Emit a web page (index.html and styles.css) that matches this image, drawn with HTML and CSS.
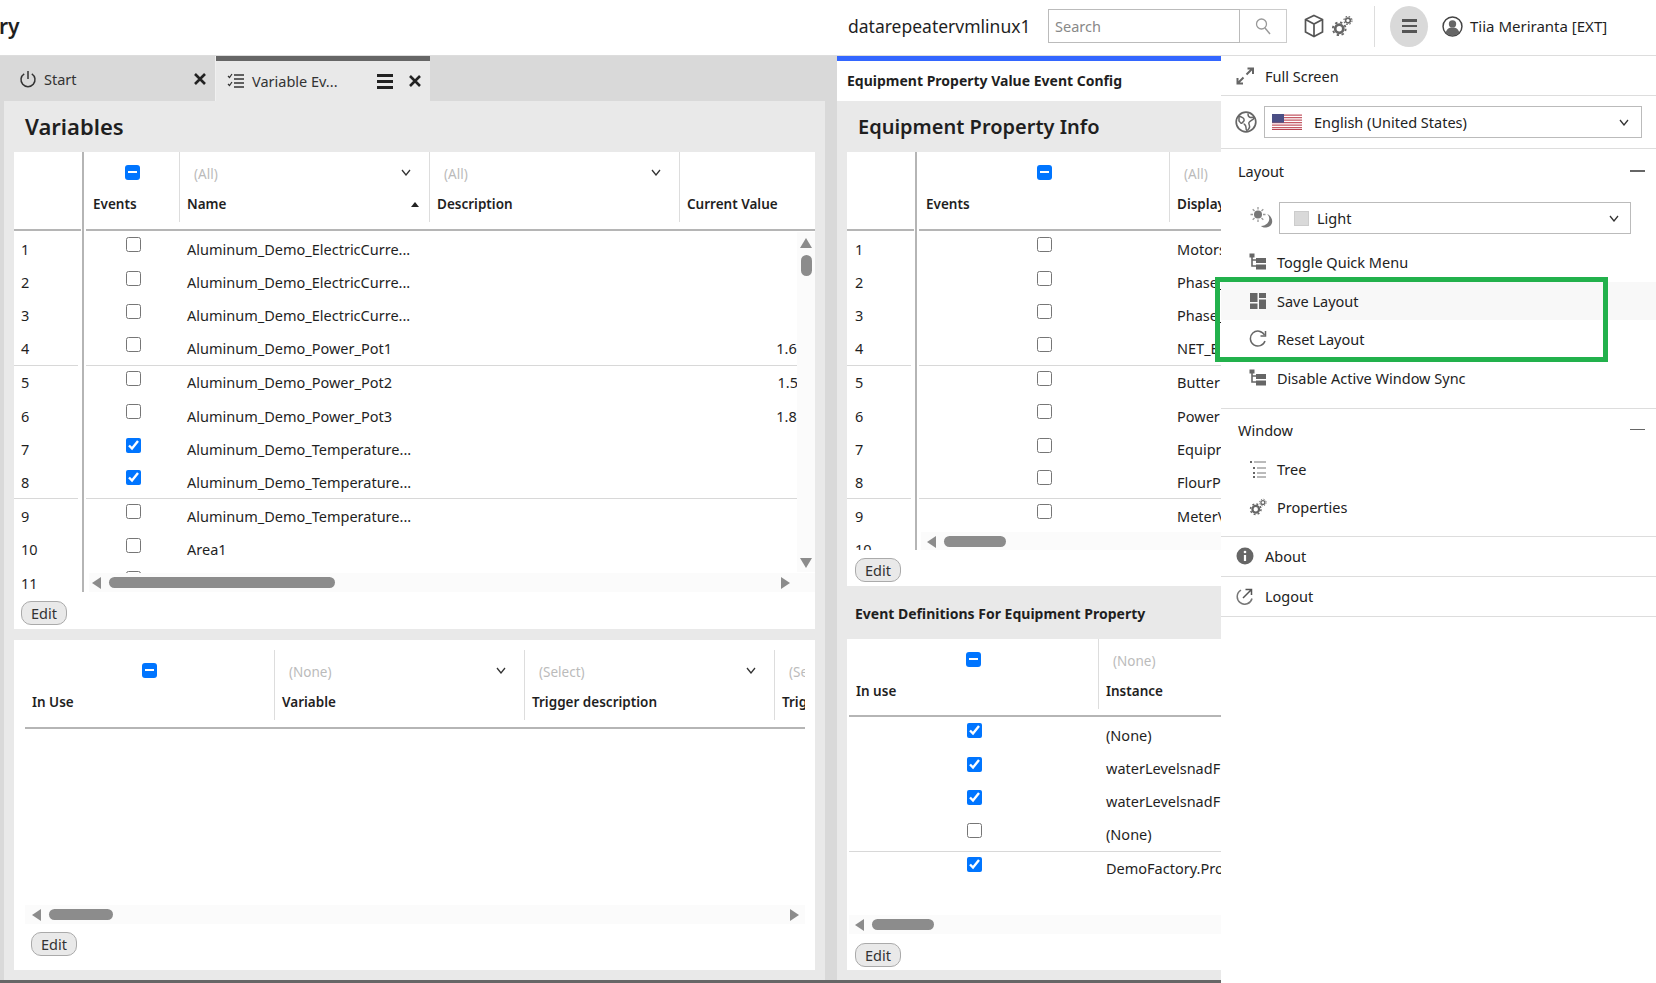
FILE: index.html
```html
<!DOCTYPE html>
<html lang="en">
<head>
<meta charset="utf-8">
<title>Variable Events</title>
<link rel="stylesheet" href="styles.css">
</head>
<body>
<svg class="defs" aria-hidden="true">
  <symbol id="chev" viewBox="0 0 10 7"><path d="M1 1l4 5 4-5" fill="none" stroke="#333" stroke-width="1.3"/></symbol>
  <symbol id="close" viewBox="0 0 12 12"><path d="M1 1l10 10M11 1L1 11" fill="none" stroke="#222" stroke-width="2.6"/></symbol>
  <symbol id="tree" viewBox="0 0 18 18"><path d="M3 3v10h5M3 7h5" fill="none" stroke="#666" stroke-width="1.6"/><rect x="0.5" y="0.5" width="5" height="4" fill="#666"/><rect x="7" y="5" width="10" height="5" fill="#666"/><rect x="7" y="11.5" width="10" height="5" fill="#666"/></symbol>
  <symbol id="gears" viewBox="0 0 24 24"><g fill="none" stroke="#666"><circle cx="9" cy="15" r="4.4" stroke-width="3"/><circle cx="9" cy="15" r="7" stroke-width="2" stroke-dasharray="2.6 2.9"/><circle cx="18.5" cy="6" r="2.6" stroke-width="1.7"/><circle cx="18.5" cy="6" r="4.4" stroke-width="1.2" stroke-dasharray="1.7 1.8"/></g></symbol>
</svg>

<div class="app">
  <header class="top">
    <div class="brand">ry</div>
    <div class="host">datarepeatervmlinux1</div>
    <div class="search">
      <div class="search-input">Search</div>
      <div class="search-btn"><svg class="i18" viewBox="0 0 18 18"><circle cx="7.5" cy="7" r="5" fill="none" stroke="#999" stroke-width="1.3"/><path d="M11 11l5 6" stroke="#999" stroke-width="1.4"/></svg></div>
    </div>
    <svg class="cube" viewBox="0 0 20 24"><path d="M10 1.5l8.5 4v12.5L10 22.5 1.5 18V5.500zM1.500 5.500L10 10l8.500-4.500M10 10v12.500" fill="none" stroke="#555" stroke-width="1.7"/></svg>
    <svg class="gears-top"><use href="#gears"/></svg>
    <div class="vr"></div>
    <div class="burger"><span></span><span></span><span></span></div>
    <svg class="user" viewBox="0 0 20 20"><circle cx="10" cy="10" r="9" fill="#fff" stroke="#444" stroke-width="1.4"/><circle cx="10" cy="7.500" r="3.500" fill="#666"/><path d="M3.500 16c1-4 3.500-5 6.500-5s5.500 1 6.500 5a9 9 0 0 1-13 0z" fill="#666"/></svg>
    <div class="username">Tiia Meriranta [EXT]</div>
  </header>

  <div class="body">
    <div class="workspace">
      <div class="panes">
        <section class="pane pane-left">
          <div class="tabs">
            <div class="tab tab-start">
              <svg class="i18" viewBox="0 0 18 18"><path d="M5.200 3.800a7 7 0 1 0 7.600 0M9 1v8" fill="none" stroke="#333" stroke-width="1.500"/></svg>
              <span class="tab-name">Start</span>
              <svg class="x"><use href="#close"/></svg>
            </div>
            <div class="tab tab-active">
              <svg class="i18" viewBox="0 0 18 18"><path d="M1 4l1.500 1.500L5 2M1 12l1.500 1.500L5 10" fill="none" stroke="#333" stroke-width="1.200"/><path d="M7 3h10M7 7h10M7 11h10M7 15h10" stroke="#333" stroke-width="1.400"/></svg>
              <span class="tab-name">Variable Ev...</span>
              <span class="tab-menu"><span></span><span></span><span></span></span>
              <svg class="x"><use href="#close"/></svg>
            </div>
          </div>
          <div class="pane-body">
            <h1 class="heading">Variables</h1>
            <div class="card card-vars">
              <div class="grid grid-vars">
                <div class="frozen">
                  <div class="hd"></div>
                  <div class="nums">
                    <div class="row num">1</div><div class="row num">2</div><div class="row num">3</div><div class="row num sep">4</div>
                    <div class="row num">5</div><div class="row num">6</div><div class="row num">7</div><div class="row num sep">8</div>
                    <div class="row num">9</div><div class="row num">10</div><div class="row num">11</div>
                  </div>
                </div>
                <div class="scroll">
                  <div class="hd cols-vars">
                    <div class="hc"><div class="f f-check"><span class="cb-ind"></span></div><div class="l">Events</div></div>
                    <div class="hc"><div class="f"><span>(All)</span><svg class="chev"><use href="#chev"/></svg></div><div class="l">Name<span class="sort"></span></div></div>
                    <div class="hc"><div class="f"><span>(All)</span><svg class="chev"><use href="#chev"/></svg></div><div class="l">Description</div></div>
                    <div class="hc hc-last"><div class="f"></div><div class="l">Current Value</div></div>
                  </div>
                  <div class="rows">
                    <div class="row cols-row"><label class="c"><input type="checkbox"></label><div class="t">Aluminum_Demo_ElectricCurre...</div></div>
                    <div class="row cols-row"><label class="c"><input type="checkbox"></label><div class="t">Aluminum_Demo_ElectricCurre...</div></div>
                    <div class="row cols-row"><label class="c"><input type="checkbox"></label><div class="t">Aluminum_Demo_ElectricCurre...</div></div>
                    <div class="row cols-row sep"><label class="c"><input type="checkbox"></label><div class="t">Aluminum_Demo_Power_Pot1</div><div class="t"></div><div class="v"><span class="cut">1.67</span></div></div>
                    <div class="row cols-row"><label class="c"><input type="checkbox"></label><div class="t">Aluminum_Demo_Power_Pot2</div><div class="t"></div><div class="v">1.5</div></div>
                    <div class="row cols-row"><label class="c"><input type="checkbox"></label><div class="t">Aluminum_Demo_Power_Pot3</div><div class="t"></div><div class="v"><span class="cut">1.86</span></div></div>
                    <div class="row cols-row"><label class="c"><input type="checkbox" checked></label><div class="t">Aluminum_Demo_Temperature...</div></div>
                    <div class="row cols-row sep"><label class="c"><input type="checkbox" checked></label><div class="t">Aluminum_Demo_Temperature...</div></div>
                    <div class="row cols-row"><label class="c"><input type="checkbox"></label><div class="t">Aluminum_Demo_Temperature...</div></div>
                    <div class="row cols-row"><label class="c"><input type="checkbox"></label><div class="t">Area1</div></div>
                    <div class="row cols-row"><label class="c"><input type="checkbox"></label><div class="t"></div></div>
                  </div>
                  <div class="vbar"><span class="arrow-up"></span><span class="vthumb"></span><span class="arrow-down"></span></div>
                  <div class="hbar hbar-vars"><span class="arrow-left"></span><span class="thumb thumb-vars"></span><span class="arrow-right"></span></div>
                </div>
              </div>
              <div class="edit-wrap"><button class="edit">Edit</button></div>
            </div>
            <div class="card card-use">
              <div class="hd cols-use">
                <div class="hc"><div class="f f-check"><span class="cb-ind"></span></div><div class="l">In Use</div></div>
                <div class="hc"><div class="f"><span>(None)</span><svg class="chev"><use href="#chev"/></svg></div><div class="l">Variable</div></div>
                <div class="hc"><div class="f"><span>(Select)</span><svg class="chev"><use href="#chev"/></svg></div><div class="l">Trigger description</div></div>
                <div class="hc hc-last"><div class="f"><span>(Select)</span></div><div class="l">Trigger</div></div>
              </div>
              <div class="empty"></div>
              <div class="hbar hbar-flow"><span class="arrow-left"></span><span class="thumb thumb-use"></span><span class="arrow-right"></span></div>
              <div class="edit-wrap edit-use"><button class="edit">Edit</button></div>
            </div>
          </div>
        </section>

        <section class="pane pane-right">
          <div class="title-tab">Equipment Property Value Event Config</div>
          <div class="pane-body pane-body-right">
            <h2 class="heading heading-right">Equipment Property Info</h2>
            <div class="card card-info">
              <div class="grid grid-info">
                <div class="frozen frozen-info">
                  <div class="hd"></div>
                  <div class="nums">
                    <div class="row num">1</div><div class="row num">2</div><div class="row num">3</div><div class="row num sep">4</div>
                    <div class="row num">5</div><div class="row num">6</div><div class="row num">7</div><div class="row num sep">8</div>
                    <div class="row num">9</div><div class="row num">10</div>
                  </div>
                </div>
                <div class="scroll">
                  <div class="hd cols-info">
                    <div class="hc"><div class="f f-check"><span class="cb-ind"></span></div><div class="l">Events</div></div>
                    <div class="hc hc-last"><div class="f"><span>(All)</span></div><div class="l">Display</div></div>
                  </div>
                  <div class="rows">
                    <div class="row cols-info-row"><label class="c"><input type="checkbox"></label><div class="t">Motors</div></div>
                    <div class="row cols-info-row"><label class="c"><input type="checkbox"></label><div class="t">Phase_</div></div>
                    <div class="row cols-info-row"><label class="c"><input type="checkbox"></label><div class="t">Phase_</div></div>
                    <div class="row cols-info-row sep"><label class="c"><input type="checkbox"></label><div class="t">NET_E</div></div>
                    <div class="row cols-info-row"><label class="c"><input type="checkbox"></label><div class="t">Butter</div></div>
                    <div class="row cols-info-row"><label class="c"><input type="checkbox"></label><div class="t">Power</div></div>
                    <div class="row cols-info-row"><label class="c"><input type="checkbox"></label><div class="t">Equipr</div></div>
                    <div class="row cols-info-row sep"><label class="c"><input type="checkbox"></label><div class="t">FlourP</div></div>
                    <div class="row cols-info-row"><label class="c"><input type="checkbox"></label><div class="t">MeterV</div></div>
                  </div>
                  <div class="hbar hbar-info"><span class="arrow-left"></span><span class="thumb thumb-info"></span></div>
                </div>
              </div>
              <div class="edit-wrap"><button class="edit">Edit</button></div>
            </div>
            <h3 class="subheading">Event Definitions For Equipment Property</h3>
            <div class="card card-defs">
              <div class="hd cols-defs">
                <div class="hc"><div class="f f-check"><span class="cb-ind"></span></div><div class="l">In use</div></div>
                <div class="hc hc-last"><div class="f"><span>(None)</span></div><div class="l">Instance</div></div>
              </div>
              <div class="rows rows-defs">
                <div class="row cols-defs-row"><label class="c"><input type="checkbox" checked></label><div class="t">(None)</div></div>
                <div class="row cols-defs-row"><label class="c"><input type="checkbox" checked></label><div class="t">waterLevelsnadF</div></div>
                <div class="row cols-defs-row"><label class="c"><input type="checkbox" checked></label><div class="t">waterLevelsnadF</div></div>
                <div class="row cols-defs-row sep"><label class="c"><input type="checkbox"></label><div class="t">(None)</div></div>
                <div class="row cols-defs-row"><label class="c"><input type="checkbox" checked></label><div class="t">DemoFactory.Pro</div></div>
              </div>
              <div class="hbar hbar-defs"><span class="arrow-left"></span><span class="thumb thumb-info"></span></div>
              <div class="edit-wrap"><button class="edit">Edit</button></div>
            </div>
          </div>
        </section>
      </div>
      <div class="bottom-bar"></div>
    </div>

    <aside class="menu">
      <div class="m-row m-full">
        <svg class="i18" viewBox="0 0 18 18"><path d="M10.500 7.500L16 2M11.500 1.500H17V7M7.500 10.500L2 16M1.500 11V16.500H7" fill="none" stroke="#666" stroke-width="2"/></svg>
        <span>Full Screen</span>
      </div>
      <div class="m-row m-lang">
        <svg class="globe" viewBox="0 0 22 22"><circle cx="11" cy="11" r="9.800" fill="#fff" stroke="#666" stroke-width="1.700"/><path d="M4 5c2 1 4 1 5 3s-1 3-2 4-2-1-3-2zM13 2.500c0 3 1 4 3 4s2-1 3 1c-2 2-4 2-5 4s2 3 0 6-3 2-3-1-2-3-2-4" fill="none" stroke="#666" stroke-width="1.500"/></svg>
        <div class="select select-lang">
          <svg class="flag" viewBox="0 0 30 16" preserveAspectRatio="none"><rect width="30" height="16" fill="#fff"/><path d="M0 1.200h30M0 3.700h30M0 6.200h30M0 8.700h30M0 11.200h30M0 13.700h30" stroke="#c45a66" stroke-width="1.300"/><rect width="30" height="1" y="15" fill="#b84452"/><rect width="12" height="8.700" fill="#4b4f85"/></svg>
          <span class="sel-text">English (United States)</span>
          <svg class="chev"><use href="#chev"/></svg>
        </div>
      </div>
      <div class="m-head"><span>Layout</span><span class="dash"></span></div>
      <div class="m-theme">
        <svg class="theme-ic" viewBox="0 0 24 24"><circle cx="9" cy="8.500" r="4" fill="#777"/><path d="M9 1v2.500M9 13.500V16M1.500 8.500H4M14 8.500h2.500M3.700 3.200l1.800 1.800M12.500 12l1.800 1.800M3.700 13.800L5.500 12M12.500 5l1.800-1.800" stroke="#999" stroke-width="1.300"/><path d="M18 8c4 3 3 11-6 12 1 2 9 3 11-3 1-4-2-8-5-9z" fill="#777"/></svg>
        <div class="select select-theme"><span class="swatch"></span><span class="sel-text">Light</span><svg class="chev"><use href="#chev"/></svg></div>
      </div>
      <div class="m-item"><svg class="i18"><use href="#tree"/></svg><span>Toggle Quick Menu</span></div>
      <div class="m-item m-hover">
        <svg class="i18" viewBox="0 0 18 18"><path d="M1 1h7.500v9H1zM10 1h7v5h-7zM10 7.500h7v9.500h-7zM1 11.500h7.500V17H1z" fill="#666"/></svg>
        <span>Save Layout</span>
      </div>
      <div class="m-item">
        <svg class="i18" viewBox="0 0 18 18"><path d="M15.500 5A7.500 7.500 0 1 0 16 11" fill="none" stroke="#666" stroke-width="1.500"/><path d="M16.500 1v5h-5" fill="none" stroke="#666" stroke-width="1.500"/></svg>
        <span>Reset Layout</span>
      </div>
      <div class="m-item"><svg class="i18"><use href="#tree"/></svg><span>Disable Active Window Sync</span></div>
      <div class="m-spacer"></div>
      <div class="m-head m-head-win"><span>Window</span><span class="dash"></span></div>
      <div class="m-item m-tight">
        <svg class="i18" viewBox="0 0 18 18"><path d="M1 2h2M4 8h2M4 13h2M4 17h2" stroke="#666" stroke-width="1.800"/><path d="M5 2h12M8 8h9M8 13h9M8 17h9" stroke="#777" stroke-width="1"/></svg>
        <span>Tree</span>
      </div>
      <div class="m-item m-tight m-last"><svg class="i18"><use href="#gears"/></svg><span>Properties</span></div>
      <div class="m-row m-about">
        <svg class="i18" viewBox="0 0 18 18"><circle cx="9" cy="9" r="8.500" fill="#666"/><circle cx="9" cy="5" r="1.300" fill="#fff"/><path d="M9 8v6" stroke="#fff" stroke-width="2.200"/></svg>
        <span>About</span>
      </div>
      <div class="m-row m-about">
        <svg class="i18" viewBox="0 0 18 18"><path d="M5 3.200a7.500 7.500 0 1 0 11 8.300" fill="none" stroke="#777" stroke-width="1.500"/><path d="M7 11l8-8M9.500 2.500H15.500V8" fill="none" stroke="#555" stroke-width="1.500"/></svg>
        <span>Logout</span>
      </div>
    </aside>
  </div>
  <div class="highlight"></div>
</div>
</body>
</html>
```
FILE: styles.css
```css
* { box-sizing: border-box; }
html, body { margin: 0; height: 100%; }
body {
  font-family: "Noto Sans", "Open Sans", sans-serif;
  font-size: 14px;
  color: #1f1f1f;
  background: #fff;
  overflow: hidden;
}
.defs { display: none; }
.app { position: relative; width: 1656px; height: 983px; display: flex; flex-direction: column; }
.i18 { width: 18px; height: 18px; flex: none; }

/* top bar */
.top { height: 56px; flex: none; display: flex; align-items: center; border-bottom: 1px solid #ddd; background: #fff; padding-bottom: 3px; }
.brand { font-size: 21px; font-weight: 600; width: 849px; margin-left: -1px; line-height: 1; }
.host { width: 200px; font-size: 17.5px; }
.search { display: flex; height: 34px; }
.search-input { width: 192px; border: 1.5px solid #bbb; border-right: 1px solid #bbb; color: #888; font-size: 14.5px; padding: 6px 6px; }
.search-btn { width: 47px; border: 1.5px solid #ccc; border-left: 0; display: flex; align-items: center; justify-content: center; }
.cube { width: 20px; height: 24px; margin-left: 17px; }
.gears-top { width: 22px; height: 22px; margin-left: 7px; }
.vr { width: 1px; height: 41px; background: #ddd; margin-left: 21px; }
.burger { width: 38px; height: 41px; border-radius: 50%; background: #d9d9d9; margin-left: 15px; display: flex; flex-direction: column; align-items: center; justify-content: center; gap: 3px; }
.burger span { width: 15px; height: 2.5px; background: #555; }
.user { width: 21px; height: 21px; margin-left: 14px; }
.username { font-size: 15px; margin-left: 7px; }

.body { flex: 1; display: flex; min-height: 0; }
.workspace { width: 1221px; flex: none; display: flex; flex-direction: column; }
.panes { flex: 1; display: flex; gap: 12px; padding-left: 4px; background: #d9d9d9; min-height: 0; }
.bottom-bar { height: 3px; flex: none; background: #666; }
.pane { display: flex; flex-direction: column; min-width: 0; }
.pane-left { width: 821px; flex: none; }
.pane-right { width: 384px; flex: none; overflow: hidden; border-top: 5px solid #36f; }

/* tabs */
.tabs { height: 45px; flex: none; display: flex; background: #d9d9d9; }
.tab { display: flex; align-items: center; font-size: 14.5px; color: #333; }
.tab-start { width: 212px; padding: 0 9px 0 15px; border-right: 1px solid #f0f0f0; }
.tab-active { width: 214px; background: #e9e9e9; border-top: 5px solid #666; padding: 0 9px 0 11px; }
.tab-name { flex: 1; margin-left: 7px; white-space: nowrap; }
.x { width: 12px; height: 12px; flex: none; }
.tab-menu { width: 16px; display: flex; flex-direction: column; gap: 3px; margin-right: 16px; }
.tab-menu span { height: 3px; background: #222; }

.pane-body { flex: 1; min-height: 0; background: #e9e9e9; padding: 0 10px; display: flex; flex-direction: column; }
.pane-body-right { padding-right: 0; }
.heading { margin: 0; height: 51px; flex: none; font-size: 22px; font-weight: 600; line-height: 51px; padding-left: 11px; color: #1f1f1f; }
.heading-right { font-size: 20px; }
.subheading { margin: 0; height: 53px; flex: none; font-size: 14px; font-weight: 700; line-height: 56px; padding-left: 8px; }
.title-tab { height: 40px; flex: none; background: #fff; font-size: 14px; font-weight: 700; line-height: 40px; padding-left: 10px; white-space: nowrap; }

/* cards */
.card { background: #fff; flex: none; }
.card-vars { height: 477px; }
.card-use { height: 330px; margin-top: 11px; padding: 10px 10px 0 11px; }
.card-info { height: 434px; }
.card-defs { height: 331px; padding: 0 0 0 2px; }

.grid { display: flex; position: relative; }
.grid-vars { height: 440px; }
.grid-info { height: 398px; }
.frozen { width: 70px; flex: none; border-right: 2px solid #b5b5b5; overflow: hidden; }
.frozen-info { width: 70px; }
.scroll { flex: 1; min-width: 0; position: relative; overflow: hidden; margin-left: 2px; }

/* header cells */
.hd { height: 77px; border-bottom: 2px solid #b5b5b5; box-sizing: content-box; margin-bottom: 1px; display: grid; overflow: hidden; }
.frozen .hd { margin-right: 1px; }
.cols-vars { grid-template-columns: 94px 250px 250px 136px; }
.cols-use { grid-template-columns: 250px 250px 250px 30px; }
.cols-info { grid-template-columns: 251px 60px; }
.cols-defs { grid-template-columns: 250px 140px; height: 76px; }
.hc { height: 70px; border-right: 1px solid #ddd; display: flex; flex-direction: column; min-width: 0; }
.hc-last { border-right: 0; overflow: hidden; }
.cols-use .hc-last { border-left: 0; }
.f { height: 42px; flex: none; display: flex; align-items: center; justify-content: space-between; padding: 2px 18px 0 14px; color: #bbb; font-size: 13.5px; white-space: nowrap; }
.f-check { justify-content: center; padding: 0; }
.l { height: 20px; margin-top: 0; padding: 0 10px 0 7px; display: flex; align-items: center; justify-content: space-between; font-size: 13.5px; font-weight: 600; white-space: nowrap; margin-top: 0; position: relative; top: 0; }
.hc .l { transform: translateY(0); }
.chev { width: 10px; height: 7px; flex: none; margin-top: -4px; }
.sort { width: 0; height: 0; border-left: 4.500px solid transparent; border-right: 4.500px solid transparent; border-bottom: 5px solid #222; }
.cb-ind { width: 15px; height: 15px; border-radius: 3px; background: #0075ff; display: flex; align-items: center; justify-content: center; margin-bottom: 2px; }
.cb-ind::after { content: ""; width: 9px; height: 2px; background: #fff; }

/* rows */
.row { height: 33.4px; flex: none; }
.sep { border-bottom: 1px solid #d8d8d8; }
.num { display: flex; align-items: center; padding-left: 7px; margin-right: 4px; font-size: 14.500px; }
.frozen-info .num { padding-left: 8px; }
.cols-row { display: grid; grid-template-columns: 94px 250px 250px 118px; align-items: center; width: 712px; }
.cols-info-row { display: grid; grid-template-columns: 251px 60px; align-items: center; }
.cols-defs-row { display: grid; grid-template-columns: 250px 140px; align-items: center; }
.c { display: flex; justify-content: center; margin-bottom: 8px; }
.c input { width: 15px; height: 15px; margin: 0; }
.t { padding-left: 7px; font-size: 14.500px; white-space: nowrap; overflow: hidden; }
.v { display: flex; justify-content: flex-end; overflow: hidden; font-size: 14.500px; }
.cut { margin-right: -7px; }
.rows-defs { height: 197px; overflow: hidden; }

/* scrollbars */
.vbar { position: absolute; right: 0; top: 80px; bottom: 20px; width: 18px; background: #fbfbfb; display: flex; flex-direction: column; align-items: center; padding-top: 6px; }
.arrow-up, .arrow-down { width: 0; height: 0; border-left: 6.500px solid transparent; border-right: 6.500px solid transparent; }
.arrow-up { border-bottom: 10px solid #8c8c8c; }
.arrow-down { border-top: 10px solid #8c8c8c; margin-top: auto; margin-bottom: 4px; }
.vthumb { width: 11px; height: 21px; border-radius: 5.500px; background: #8c8c8c; margin-top: 7px; }
.hbar { height: 19px; background: #fbfbfb; display: flex; align-items: center; padding: 0 7px 0 3px; overflow: hidden; }
.hbar-vars { position: absolute; left: 3px; right: 0; bottom: 0; padding: 0 25px 0 3px; }
.hbar-info { position: absolute; left: 2px; right: 0; top: 380px; padding-left: 6px; }
.hbar-flow { padding: 0 6px 0 7px; }
.hbar-defs { padding-left: 6px; margin-top: 0; }
.arrow-left, .arrow-right { width: 0; height: 0; border-top: 6.500px solid transparent; border-bottom: 6.500px solid transparent; flex: none; }
.arrow-left { border-right: 9px solid #8c8c8c; }
.arrow-right { border-left: 9px solid #8c8c8c; margin-left: auto; }
.thumb { height: 11px; border-radius: 5.500px; background: #8c8c8c; margin-left: 8px; flex: none; }
.thumb-vars { width: 226px; }
.thumb-use { width: 64px; }
.thumb-info { width: 62px; }

.empty { height: 175px; }
.edit-wrap { padding: 9px 0 0 7px; }
.card-info .edit-wrap { padding-left: 8px; padding-top: 8px; }
.card-defs .edit-wrap { padding-left: 6px; padding-top: 9px; }
.edit-use { padding-left: 6px; padding-top: 8px; }
.edit { width: 46px; height: 24px; padding: 0; border: 1px solid #aaa; border-radius: 10px; background: #e9e9e9; color: #333; font: 14.500px "Noto Sans", "Open Sans", sans-serif; display: block; }

/* menu */
.menu { width: 435px; flex: none; background: #fff; font-size: 14.500px; color: #222; }
.m-row { display: flex; align-items: center; border-bottom: 1px solid #ddd; }
.m-full { height: 40px; padding-left: 15px; gap: 11px; }
.m-lang { height: 53px; padding-left: 14px; }
.globe { width: 22px; height: 22px; flex: none; }
.select { display: flex; align-items: center; border: 1.500px solid #bbb; background: #fff; }
.select .chev { margin-top: 0; }
.select-lang { width: 378px; height: 32px; margin-left: 7px; padding: 0 12px 0 7px; }
.flag { width: 30px; height: 16px; flex: none; }
.sel-text { flex: 1; margin-left: 12px; }
.m-head { height: 44px; display: flex; align-items: center; justify-content: space-between; padding: 0 11px 0 17px; }
.dash { width: 15px; height: 1.500px; background: #666; }
.m-theme { height: 50px; display: flex; align-items: center; padding-left: 28px; }
.theme-ic { width: 24px; height: 24px; flex: none; }
.select-theme { width: 352px; height: 32px; margin-left: 6px; padding: 0 11px 0 14px; }
.swatch { width: 15px; height: 15px; background: #d9d9d9; border: 1px solid #ccc; flex: none; }
.select-theme .sel-text { margin-left: 8px; }
.m-item { height: 38.500px; display: flex; align-items: center; padding-left: 28px; gap: 10px; }
.m-hover { background: #f8f8f8; }
.m-spacer { height: 12px; border-bottom: 1px solid #ddd; }
.m-head-win { height: 41px; }
.m-last { height: 48px; padding-bottom: 10px; border-bottom: 1px solid #ddd; }
.m-about { height: 40px; padding-left: 15px; gap: 11px; }

/* annotation drawn over the menu */
.highlight { position: absolute; left: 1215px; top: 277px; width: 393px; height: 85px; border: 5px solid #22b14c; pointer-events: none; }
```
